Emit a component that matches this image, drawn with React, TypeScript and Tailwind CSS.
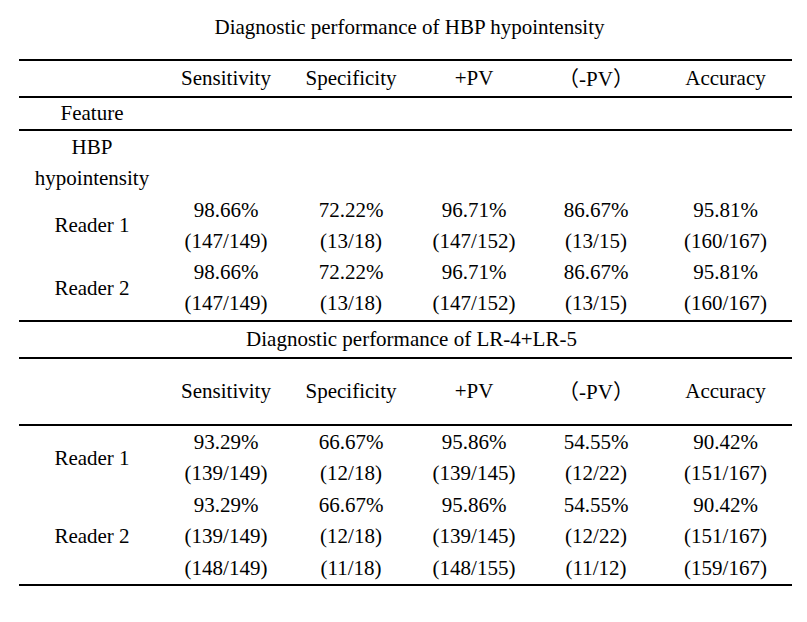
import React from "react";

const cols = "grid grid-cols-[146px_122px_128px_118px_126px_133px]";
const font = { fontFamily: '"Liberation Serif", "Noto Sans CJK SC", serif' };

const Rule = () => <div className="h-[2px] bg-black w-full" />;

const Header = ({ h }: { h: string }) => (
  <div className={`${cols} ${h} items-center text-center`}>
    <div />
    <div>Sensitivity</div>
    <div>Specificity</div>
    <div>+PV</div>
    <div>
      <span style={{ fontFamily: '"Noto Sans CJK SC", sans-serif' }}>（</span>-PV
      <span style={{ fontFamily: '"Noto Sans CJK SC", sans-serif' }}>）</span>
    </div>
    <div>Accuracy</div>
  </div>
);

type Cell = string[];
const ReaderRow = ({ label, cells, lh }: { label: string; cells: Cell[]; lh: string }) => (
  <div className={`${cols} text-center ${lh}`}>
    <div className="flex items-center justify-center">{label}</div>
    {cells.map((c, i) => (
      <div key={i} className="flex flex-col">
        {c.map((t, j) => (
          <div key={j}>{t}</div>
        ))}
      </div>
    ))}
  </div>
);

export default function App() {
  const r1: Cell[] = [
    ["98.66%", "(147/149)"],
    ["72.22%", "(13/18)"],
    ["96.71%", "(147/152)"],
    ["86.67%", "(13/15)"],
    ["95.81%", "(160/167)"],
  ];
  const s1: Cell[] = [
    ["93.29%", "(139/149)"],
    ["66.67%", "(12/18)"],
    ["95.86%", "(139/145)"],
    ["54.55%", "(12/22)"],
    ["90.42%", "(151/167)"],
  ];
  const s2: Cell[] = [
    ["93.29%", "(139/149)", "(148/149)"],
    ["66.67%", "(12/18)", "(11/18)"],
    ["95.86%", "(139/145)", "(148/155)"],
    ["54.55%", "(12/22)", "(11/12)"],
    ["90.42%", "(151/167)", "(159/167)"],
  ];
  return (
    <div className="w-[807px] h-[622px] bg-white text-black text-[21px]" style={font}>
      <div className="h-[59px] pt-[12px] leading-[30px] text-center pl-[12px]">
        Diagnostic performance of HBP hypointensity
      </div>
      <div className="ml-[19px] w-[773px]">
        <Rule />
        <Header h="h-[35px]" />
        <Rule />
        <div className={`${cols} h-[31px] items-center text-center`}>
          <div>Feature</div>
        </div>
        <Rule />
        <div className="pt-[1px]">
          <div className={`${cols} text-center leading-[31.3px]`}>
            <div className="flex flex-col">
              <div>HBP</div>
              <div>hypointensity</div>
            </div>
          </div>
          <ReaderRow label="Reader 1" cells={r1} lh="leading-[31.3px]" />
          <ReaderRow label="Reader 2" cells={r1} lh="leading-[31.3px]" />
        </div>
        <Rule />
        <div className="h-[35px] flex items-center justify-center pl-[12px]">
          Diagnostic performance of LR-4+LR-5
        </div>
        <Rule />
        <Header h="h-[65px]" />
        <Rule />
        <div className="pt-[1px]">
          <ReaderRow label="Reader 1" cells={s1} lh="leading-[31.5px]" />
          <ReaderRow label="Reader 2" cells={s2} lh="leading-[31.5px]" />
        </div>
        <Rule />
      </div>
    </div>
  );
}
